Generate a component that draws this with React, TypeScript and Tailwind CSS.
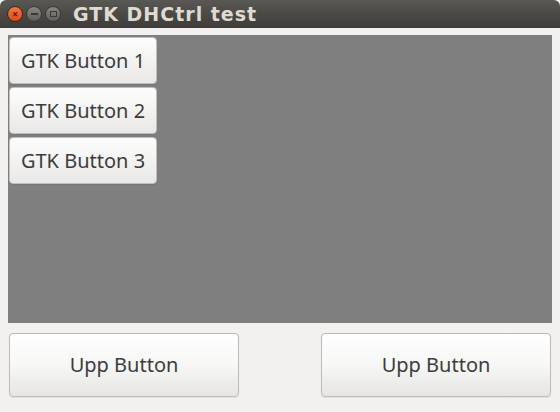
import React from 'react';

function GtkButton({ label }: { label: string }) {
    return (
        <button className="h-[47px] w-[148px] rounded-[4px] border border-[#c2bfba] bg-gradient-to-b from-[#fdfdfd] to-[#e9e8e6] text-[20px] text-[#3c3c3c] shadow-[0_1px_1px_rgba(0,0,0,0.08)]">
            {label}
        </button>
    );
}

function UppButton() {
    return (
        <button className="h-[64px] w-[230px] rounded-[4px] border border-[#bdbab5] bg-gradient-to-b from-[#fefefe] via-[#f7f7f6] to-[#e6e5e3] text-[20px] text-[#3c3c3c] shadow-[0_1px_1px_rgba(0,0,0,0.06)]">
            Upp Button
        </button>
    );
}

export default function App() {
    return (
        <div className="flex h-[412px] w-[560px] flex-col overflow-hidden rounded-t-[6px] bg-[#f2f1f0] font-['Noto_Sans',sans-serif]">
            {/* title bar */}
            <div className="flex h-[28px] items-center bg-gradient-to-b from-[#5a5853] to-[#3d3c38] pl-[7px]">
                <div className="flex items-center gap-[3px]">
                    <span className="flex h-[16px] w-[16px] items-center justify-center rounded-full border border-[#3a2a22] bg-gradient-to-b from-[#f4774a] to-[#dc4a19] text-[10px] font-bold leading-none text-[#5a1a05]">
                        ×
                    </span>
                    <span className="flex h-[16px] w-[16px] items-center justify-center rounded-full border border-[#3a3935] bg-gradient-to-b from-[#8a8883] to-[#5f5e59]">
                        <span className="h-[2px] w-[7px] bg-[#3a3935]" />
                    </span>
                    <span className="flex h-[16px] w-[16px] items-center justify-center rounded-full border border-[#3a3935] bg-gradient-to-b from-[#8a8883] to-[#5f5e59]">
                        <span className="h-[6px] w-[7px] border border-[#3a3935]" />
                    </span>
                </div>
                <span className="ml-[12px] font-['DejaVu_Sans',sans-serif] text-[19px] font-bold tracking-[1px] text-[#dfdbd2]">GTK DHCtrl test</span>
            </div>

            {/* body */}
            <div className="flex flex-1 flex-col px-[8px] pt-[7px]">
                <div className="flex h-[288px] flex-col gap-[3px] bg-[#7f7f7f] pl-[1px] pt-[2px]">
                    <GtkButton label="GTK Button 1" />
                    <GtkButton label="GTK Button 2" />
                    <GtkButton label="GTK Button 3" />
                </div>
                <div className="mt-[10px] flex justify-between pl-[1px] pr-[1px]">
                    <UppButton />
                    <UppButton />
                </div>
            </div>
        </div>
    );
}
